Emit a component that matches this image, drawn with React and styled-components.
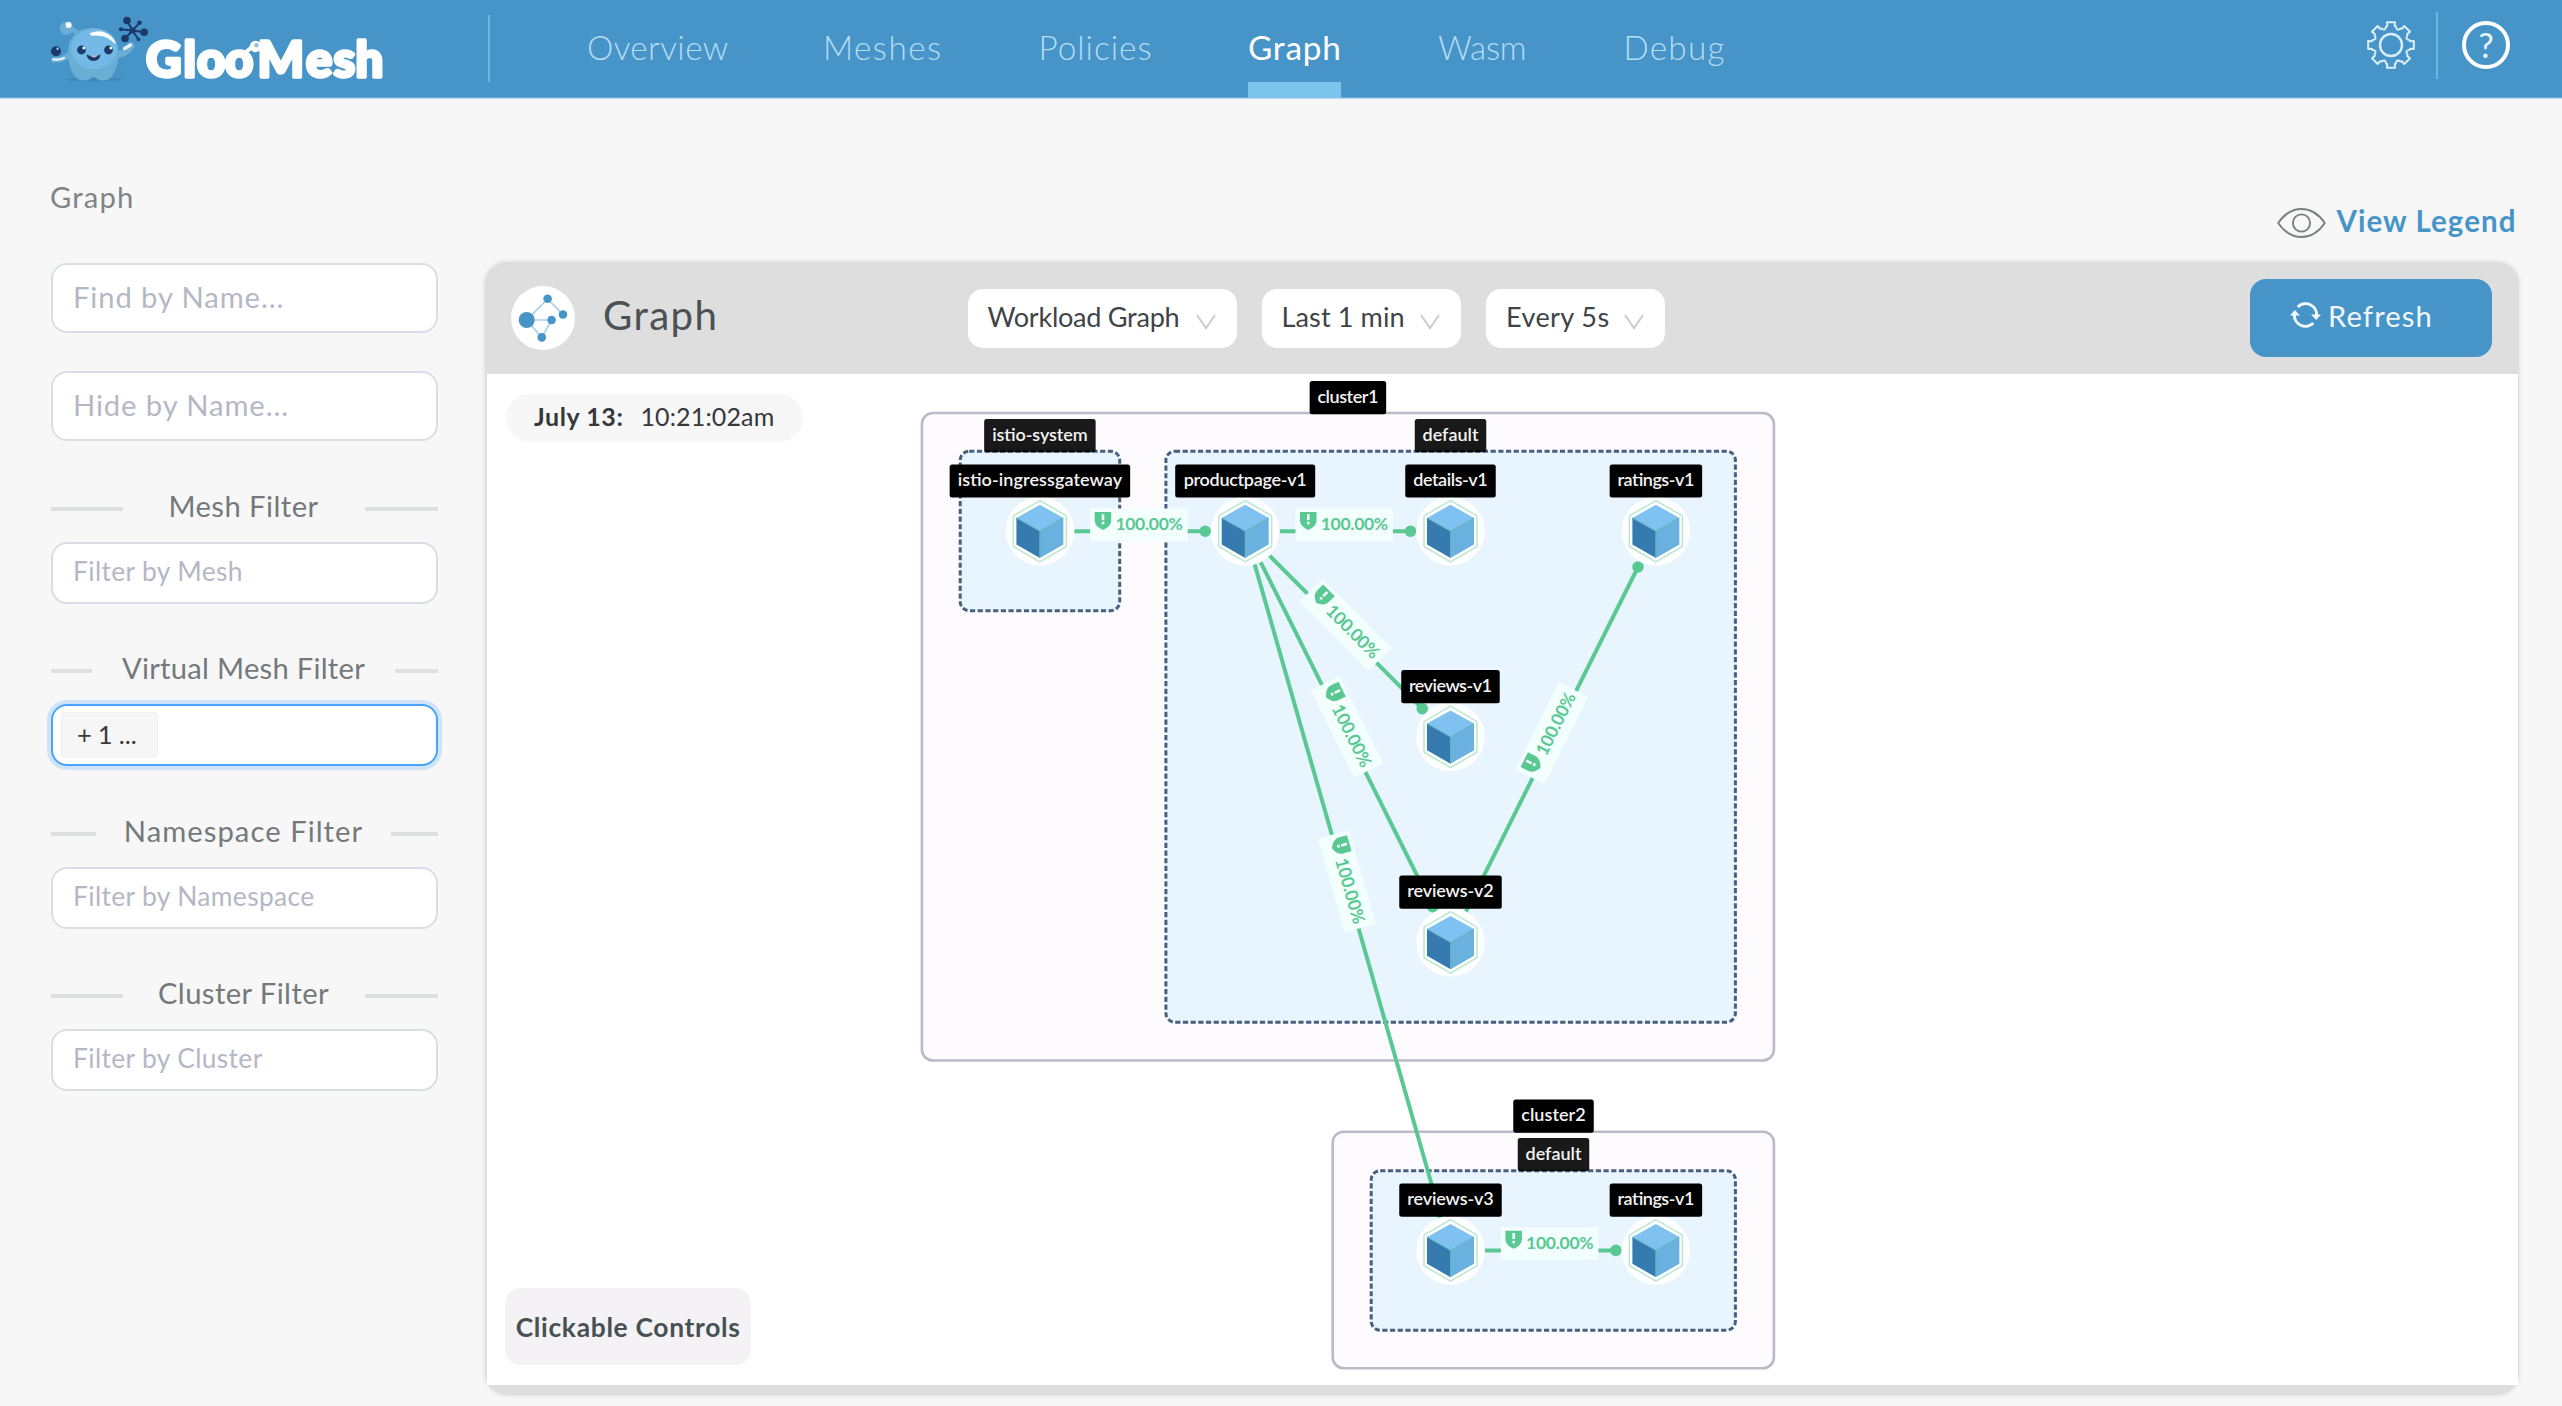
import React from 'react';
import styled, { createGlobalStyle } from 'styled-components';

const blue = '#4794c9';
const green = '#5ac893';
const sans = "Lato, 'Open Sans', 'Liberation Sans', sans-serif";

const GlobalStyle = createGlobalStyle`
  * { box-sizing: border-box; }
  body {
    margin: 0;
    background: #f7f7f7;
    font-family: ${sans};
    -webkit-font-smoothing: antialiased;
  }
`;

/* ---------- shell ---------- */

const Page = styled.div`
  display: flex;
  flex-direction: column;
  width: 2562px;
  height: 1406px;
  overflow: hidden;
`;

const Header = styled.header`
  display: flex;
  height: 99px;
  background: ${blue};
  border-bottom: 1px solid #bcdaee;
  box-shadow: inset 0 -1px 0 #66addb;
`;

const LogoArea = styled.div`
  width: 488px;
`;

const Divider = styled.div`
  width: 2px;
  height: 67px;
  margin-top: ${p => p.$top}px;
  background: #6cb5e0;
`;

const Nav = styled.nav`
  display: flex;
  gap: 97px;
  margin-left: 97px;
  flex: 1;
`;

const NavLink = styled.a`
  width: ${p => p.$width}px;
  height: 98px;
  line-height: 94px;
  white-space: nowrap;
  font-size: 33.3px;
  font-weight: ${p => (p.$active ? 400 : 300)};
  letter-spacing: ${p => p.$spacing}px;
  color: ${p => (p.$active ? '#fff' : '#b5dcf3')};
  border-bottom: 16px solid ${p => (p.$active ? '#7cc4ec' : 'transparent')};
`;

const HeaderTools = styled.div`
  display: flex;
  align-items: flex-start;
  padding-right: 52px;
`;

const GearButton = styled.div`
  width: 50px;
  height: 50px;
  margin: 20px 20px 0 0;
`;

const HelpButton = styled.div`
  display: flex;
  align-items: center;
  justify-content: center;
  width: 48px;
  height: 48px;
  margin: 21px 0 0 24px;
  border: 4px solid #fff;
  border-radius: 50%;
  color: #e9f5fc;
  font-size: 34px;
  line-height: 40px;
`;

const Content = styled.div`
  display: flex;
  padding: 0 43px 0 51px;
  gap: 47.5px;
  flex: 1;
`;

/* ---------- sidebar ---------- */

const Sidebar = styled.aside`
  display: flex;
  flex-direction: column;
  width: 386.5px;
  padding-top: 78px;
`;

const PageTitle = styled.h1`
  margin: 0 0 45.5px -1px;
  font-size: 29.2px;
  line-height: 40px;
  font-weight: 400;
  letter-spacing: 1.18px;
  color: #7f8487;
`;

const TextBox = styled.div`
  display: flex;
  align-items: center;
  flex: none;
  height: ${p => (p.$small ? 62 : 70)}px;
  padding: 0 ${p => (p.$chip ? 8 : 20)}px ${p => (p.$chip ? 0 : p.$small ? 4 : 3)}px;
  border: 2px solid ${p => (p.$focused ? '#49a5fb' : '#dadee3')};
  border-radius: 16px;
  background: #fff;
  box-shadow: ${p => (p.$focused ? '0 0 0 4px rgba(24, 130, 255, 0.17)' : 'none')};
  font-size: ${p => (p.$small ? 26.4 : 29.2)}px;
  letter-spacing: ${p => (p.$small ? 0.35 : 0.9)}px;
  color: #b4b8c5;
  white-space: nowrap;
`;

const SearchBox = styled(TextBox)`
  margin-bottom: ${p => (p.$last ? 0 : 38.5)}px;
`;

const FilterGroup = styled.section`
  display: flex;
  flex-direction: column;
  gap: 16.6px;
  margin-top: 44px;
`;

const FilterTitle = styled.div`
  display: flex;
  align-items: center;
  justify-content: space-between;
  height: 40px;
  font-size: 29.2px;
  letter-spacing: ${p => p.$spacing}px;
  color: #75797c;
  white-space: nowrap;
`;

const Rule = styled.span`
  width: ${p => p.$width}px;
  height: 4px;
  margin-top: 7px;
  background: #dedfdf;
`;

const Chip = styled.span`
  display: flex;
  align-items: center;
  width: 97px;
  height: 46.5px;
  padding: 0 0 2px 15px;
  border: 1px solid #f0f0f1;
  border-radius: 4px;
  background: #f6f6f6;
  color: #383b3d;
  font-size: 25.5px;
  letter-spacing: 0;
  word-spacing: -0.5px;
`;

/* ---------- main card ---------- */

const Main = styled.main`
  display: flex;
  flex-direction: column;
  flex: 1;
`;

const LegendLink = styled.div`
  display: flex;
  align-items: center;
  justify-content: flex-end;
  gap: 10.5px;
  height: 40px;
  margin: 101px 2.5px 22.3px 0;
  color: ${blue};
  font-size: 29.5px;
  font-weight: 700;
  letter-spacing: 1.05px;
  white-space: nowrap;

  svg { margin-top: 6px; }
`;

const Card = styled.section`
  display: flex;
  flex-direction: column;
  width: 2034px;
  height: 1133px;
  padding: 0 1.5px 10.5px;
  border-radius: 22px;
  background: #dedede;
  box-shadow: 0 0 5px rgba(0, 0, 0, 0.13);
`;

const CardHeader = styled.div`
  display: flex;
  align-items: center;
  height: 112px;
  padding-right: 25.5px;
`;

const Brand = styled.div`
  display: flex;
  align-items: center;
  gap: 28px;
  width: 481px;
  padding-left: 24.5px;
`;

const CardTitle = styled.h2`
  margin: 0;
  padding-bottom: 7px;
  color: #4b5154;
  font-size: 40.2px;
  font-weight: 400;
  letter-spacing: 1.4px;
`;

const Selects = styled.div`
  display: flex;
  gap: 25px;
`;

const Select = styled.div`
  display: flex;
  align-items: center;
  justify-content: space-between;
  width: ${p => p.$width}px;
  height: 58.7px;
  padding: 0 21px 4px 20px;
  border-radius: 15px;
  background: #fff;
  color: #3f4447;
  font-size: 27.1px;
  letter-spacing: ${p => p.$spacing}px;
  white-space: nowrap;

  svg { margin-top: 11px; }
`;

const RefreshButton = styled.div`
  display: flex;
  align-items: center;
  gap: 7px;
  width: 242px;
  height: 78px;
  margin-left: auto;
  padding: 0 0 6px 40px;
  border-radius: 16px;
  background: ${blue};
  color: #f0f8fd;
  font-size: 29.2px;
  letter-spacing: 1.1px;
`;

const Canvas = styled.div`
  position: relative;
  flex: 1;
  background: #fff;
  overflow: hidden;

  > svg { display: block; }
`;

const TimePill = styled.div`
  position: absolute;
  left: 19.5px;
  top: 19.5px;
  display: flex;
  align-items: center;
  gap: 17px;
  width: 297px;
  height: 48px;
  padding: 0 0 4px 28px;
  border-radius: 24px;
  background: #f7f7f7;
  color: #35393b;
  font-size: 25px;
  letter-spacing: 0.15px;
  white-space: nowrap;

  b { letter-spacing: 0.58px; }
`;

const ControlsButton = styled.div`
  position: absolute;
  left: 18.8px;
  bottom: 19.5px;
  display: flex;
  align-items: center;
  justify-content: center;
  width: 245.7px;
  height: 77.5px;
  border-radius: 16px;
  background: #f4f2f5;
  color: #475153;
  font-size: 26.4px;
  font-weight: 700;
  letter-spacing: 0.68px;
  white-space: nowrap;
`;

/* ---------- icons ---------- */

function Logo() {
  const navy = '#1b3a6b';
  const spokes = [[127, 20.5, 3.8], [139.5, 22.8, 2.3], [120.8, 29.2, 2], [144.2, 32.2, 3.8], [125, 38.5, 3.8], [138.5, 39.5, 1.8]];
  return (
    <svg width="488" height="98" viewBox="0 0 488 98">
      <ellipse cx="94" cy="79.5" rx="29" ry="1.8" fill="#3f88bd" />
      <path d="M78 33 L70 28" stroke="#6aaed4" strokeWidth="5" strokeLinecap="round" />
      <circle cx="66.5" cy="28.3" r="6.8" fill="#6aaed4" />
      <circle cx="68.6" cy="25" r="3" fill="#fff" />
      <path d="M70 54 Q64 60 54 60" stroke="#6aaed4" strokeWidth="5.5" fill="none" strokeLinecap="round" />
      <path d="M53 59.3 Q59 60.5 64 58" stroke="#e8f4fb" strokeWidth="2.2" fill="none" strokeLinecap="round" />
      <circle cx="56" cy="51.3" r="5" fill={navy} />
      <circle cx="57.6" cy="48.8" r="1.2" fill="#9cc8e6" />
      <path d="M116 55 Q126 54 131 46" stroke="#6aaed4" strokeWidth="7" fill="none" strokeLinecap="round" />
      <path d="M124.5 48.5 L130.5 45" stroke="#e8f4fb" strokeWidth="3.2" strokeLinecap="round" />
      <path d="M68 52 C68 36 79 28 93.5 28 C108 28 118.5 37 118.5 52 C118.5 62 116 70 112 76 C108 82 99 82 93.5 76.5 C88 82 79 82 74.5 76 C71 70 68 62 68 52 Z" fill="#6aaed4" />
      <ellipse cx="94" cy="49" rx="23" ry="20.3" fill="#74b9e5" />
      <path d="M90.5 33.5 C101 29.5 111 34 115 43 C109 36.5 101 34 92 35.2 Z" fill="#fff" stroke="#fff" strokeWidth="1.3" strokeLinejoin="round" />
      <circle cx="81.5" cy="50" r="4.4" fill={navy} />
      <circle cx="108.5" cy="50" r="4.4" fill={navy} />
      <circle cx="83.8" cy="48" r="1.5" fill="#e8f4fb" />
      <circle cx="110.8" cy="48" r="1.5" fill="#e8f4fb" />
      <path d="M86.5 54.5 Q93.5 57.5 100.5 54.5 Q100 61 93.5 61 Q87.5 61 86.5 54.5 Z" fill={navy} />
      <path d="M89 55.5 L98.5 55.5 L94 57.8 Z" fill="#c3b6c4" />
      {spokes.map(([x, y, r]) => (
        <g key={x}>
          <path d={`M132.5 30.5 L${x} ${y}`} stroke={navy} strokeWidth="2" />
          <circle cx={x} cy={y} r={r} fill={navy} />
        </g>
      ))}
      <circle cx="132.5" cy="30.5" r="3" fill={navy} />
      <text
        x="146 183.5 197 225 257.5 306 333.5 355.5"
        y="76.8"
        fontFamily={sans}
        fontWeight="900"
        fontSize="49"
        fill="#fff"
        stroke="#fff"
        strokeWidth="3.4"
        strokeLinejoin="round"
      >
        GlooMesh
      </text>
      <path d="M246 52 L252 47" stroke="#fff" strokeWidth="4" strokeLinecap="round" />
      <circle cx="255.5" cy="46.5" r="5.8" fill="#fff" />
      <circle cx="256.5" cy="45.3" r="2.2" fill="#8fc0e2" />
    </svg>
  );
}

function Gear() {
  const at = (r, deg) => {
    const a = (deg * Math.PI) / 180;
    return `${(25 + r * Math.cos(a)).toFixed(2)} ${(25 + r * Math.sin(a)).toFixed(2)}`;
  };
  let d = '';
  for (let k = 0; k < 8; k += 1) {
    const c = k * 45;
    d += `${k ? 'L' : 'M'}${at(19, c - 15)} L${at(19.5, c - 11)} L${at(23.2, c - 10)} L${at(23.2, c + 10)} L${at(19.5, c + 11)} L${at(19, c + 15)} Q${at(14.8, c + 22.5)} ${at(19, c + 30)} `;
  }
  return (
    <svg width="50" height="50" viewBox="0 0 50 50" fill="none" stroke="#d9eefa" strokeWidth="2" strokeLinejoin="round">
      <path d={`${d}Z`} />
      <circle cx="25" cy="25" r="11" strokeWidth="2.4" />
    </svg>
  );
}

const Eye = () => (
  <svg width="49" height="30" viewBox="0 0 49 30" fill="none" stroke="#7b7f82" strokeWidth="1.9">
    <path d="M1.2 15 C14 -3.7 35 -3.7 47.8 15 C35 33.7 14 33.7 1.2 15 Z" strokeLinejoin="round" />
    <circle cx="24.5" cy="15" r="8.6" />
  </svg>
);

const Chevron = () => (
  <svg width="20" height="16" viewBox="0 0 20 16" fill="none" stroke="#cdcbd1" strokeWidth="2">
    <path d="M1 1 L10 14 L19 1" />
  </svg>
);

const RefreshIcon = () => (
  <svg width="31" height="26" viewBox="0 0 31 26" fill="none" stroke="#f4fafe" strokeWidth="3">
    <path d="M4.5 12 A11 11 0 0 0 23.3 21" />
    <path d="M26.5 14 A11 11 0 0 0 7.7 5" />
    <path d="M0 13.5 L4.8 8 L10 13.5 Z" fill="#f4fafe" stroke="none" />
    <path d="M21 12.5 L31 12.5 L26.2 18 Z" fill="#f4fafe" stroke="none" />
  </svg>
);

const GraphBadge = () => (
  <svg width="64" height="64" viewBox="0 0 64 64">
    <circle cx="32" cy="32" r="32" fill="#fff" />
    <path d="M15.7 34 L36.6 13 L52 28.5 M15.7 34 H40.6 L30.8 51.5 Z" fill="none" stroke="#a5cfea" strokeWidth="1.6" />
    <g fill={blue}>
      <circle cx="15.7" cy="34" r="8" />
      <circle cx="36.6" cy="12.8" r="4.3" />
      <circle cx="52" cy="28.5" r="4.3" />
      <circle cx="40.6" cy="34" r="4.3" />
      <circle cx="30.8" cy="51.4" r="4.3" />
    </g>
  </svg>
);

/* ---------- service graph ---------- */

const nodes = {
  gateway: { x: 1039.7, y: 531.5, name: 'istio-ingressgateway', box: 180.5, text: 164.5 },
  product: { x: 1245, y: 531.5, name: 'productpage-v1', box: 140, text: 123 },
  details: { x: 1450.3, y: 531.5, name: 'details-v1', box: 90.5, text: 74.5 },
  ratings: { x: 1655.7, y: 531.5, name: 'ratings-v1', box: 92.5, text: 77 },
  reviews1: { x: 1450.3, y: 737.2, name: 'reviews-v1', box: 98.5, text: 83 },
  reviews2: { x: 1450.3, y: 942.7, name: 'reviews-v2', box: 102.5, text: 86.5 },
  reviews3: { x: 1450.3, y: 1250.7, name: 'reviews-v3', box: 102.5, text: 86.5 },
  ratings2: { x: 1655.7, y: 1250.7, name: 'ratings-v1', box: 92.5, text: 77 },
};

const edges = [
  { from: 'gateway', to: 'product', lx: 1139, ly: 525 },
  { from: 'product', to: 'details', lx: 1344.3, ly: 525 },
  { from: 'product', to: 'reviews1', lx: 1345.3, ly: 625.3 },
  { from: 'product', to: 'reviews2', lx: 1346.7, ly: 727.5 },
  { from: 'product', to: 'reviews3', lx: 1346.7, ly: 881.8 },
  { from: 'reviews2', to: 'ratings', lx: 1551.7, ly: 733.3 },
  { from: 'reviews3', to: 'ratings2', lx: 1549.7, ly: 1243.8 },
];

const clusters = [
  { x: 921.7, y: 413.3, w: 852, h: 647.5 },
  { x: 1332.5, y: 1132, w: 441.2, h: 236.5 },
];

const namespaces = [
  { x: 960, y: 451.5, w: 159.5, h: 159.5 },
  { x: 1165.7, y: 451.5, w: 569.5, h: 571 },
  { x: 1371, y: 1171, w: 364.2, h: 159.5 },
];

const groupLabels = [
  { x: 1347.7, y: 398, name: 'cluster1', box: 76.5, text: 61 },
  { x: 1553.3, y: 1116.5, name: 'cluster2', box: 80.5, text: 64.5 },
  { x: 1039.7, y: 436, name: 'istio-system', box: 111.5, text: 95.5, soft: true },
  { x: 1450.3, y: 436, name: 'default', box: 71.5, text: 56, soft: true },
  { x: 1553.3, y: 1155, name: 'default', box: 71.5, text: 56, soft: true },
];

const TagText = styled.text`
  font-family: ${sans};
  font-size: 18px;
  font-weight: 600;
  fill: #f3f3f3;
  text-anchor: middle;
`;

const RateText = styled.text`
  font-family: ${sans};
  font-size: 17.5px;
  font-weight: 700;
  fill: ${green};
`;

function Tag({ x, y, name, box, text, soft }) {
  return (
    <g>
      <rect x={x - box / 2} y={y - 16.6} width={box} height="33.2" rx="2.5" fill="#000" fillOpacity={soft ? 0.9 : 1} />
      <TagText x={x} y={y + 5} textLength={text}>{name}</TagText>
    </g>
  );
}

function Node({ x, y, ...tag }) {
  return (
    <g>
      <g transform={`translate(${x} ${y})`}>
        <circle r="34.3" fill="#fff" />
        <path d="M0 -30.7 L26.5 -15.3 V15.3 L0 30.7 L-26.5 15.3 V-15.3 Z" fill="none" stroke="#b9e8d1" strokeWidth="1.5" />
        <path d="M0 -26.5 L23.5 -13.3 L0 0 L-23.5 -13.3 Z" fill="#7fc2f1" />
        <path d="M-23.5 -13.3 L0 0 V26.8 L-23.5 13.3 Z" fill="#357bb0" />
        <path d="M23.5 -13.3 L0 0 V26.8 L23.5 13.3 Z" fill="#6bb1e0" />
        <path d="M-23.5 -13.3 L0 0 L23.5 -13.3 M0 0 V26.5" fill="none" stroke="#5cb5b5" strokeWidth="1" />
      </g>
      <Tag x={x} y={y - 50.2} {...tag} />
    </g>
  );
}

function Edge({ from, to, lx, ly }) {
  const a = nodes[from];
  const b = nodes[to];
  const len = Math.hypot(b.x - a.x, b.y - a.y);
  const ux = (b.x - a.x) / len;
  const uy = (b.y - a.y) / len;
  const angle = (Math.atan2(uy, ux) * 180) / Math.PI;
  const endX = b.x - ux * 40;
  const endY = b.y - uy * 40;
  return (
    <g>
      <path d={`M${a.x + ux * 34.5} ${a.y + uy * 34.5} L${endX} ${endY}`} stroke={green} strokeWidth="4" />
      <circle cx={endX} cy={endY} r="5.8" fill={green} />
      <g transform={`translate(${lx} ${ly}) rotate(${angle})`}>
        <rect x="-49" y="-16.2" width="97.5" height="32.4" fill="#f2fffd" />
        <path d="M-44.5 -12.8 H-28 V-4 Q-28 1.5 -36.2 5.3 Q-44.5 1.5 -44.5 -4 Z" fill={green} />
        <path d="M-36.2 -10.5 V-4.5" stroke="#f2fffd" strokeWidth="2.6" />
        <circle cx="-36.2" cy="-1.6" r="1.5" fill="#f2fffd" />
        <RateText x="-23.8" y="5.5" textLength="67.5">100.00%</RateText>
      </g>
    </g>
  );
}

function ServiceGraph() {
  return (
    <svg width="2031" height="1011" viewBox="486.8 374.3 2031 1011">
      {clusters.map(c => (
        <rect key={c.y} x={c.x} y={c.y} width={c.w} height={c.h} rx="11" fill="#fdfbfe" stroke="#bbbbc7" strokeWidth="2.6" />
      ))}
      {namespaces.map(n => (
        <rect key={n.x} x={n.x} y={n.y} width={n.w} height={n.h} rx="9" fill="#e8f5fe" stroke="#48607f" strokeWidth="3" strokeDasharray="5.2 2.5" />
      ))}
      {edges.map(e => <Edge key={e.from + e.to} {...e} />)}
      {groupLabels.map(l => <Tag key={l.name + l.y} {...l} />)}
      {Object.entries(nodes).map(([id, n]) => <Node key={id} {...n} />)}
    </svg>
  );
}

/* ---------- app ---------- */

const links = [
  { label: 'Overview', width: 139, spacing: 0.4 },
  { label: 'Meshes', width: 118.5, spacing: 1.4 },
  { label: 'Policies', width: 112.5, spacing: 0.98 },
  { label: 'Graph', width: 93, spacing: 0.8, active: true },
  { label: 'Wasm', width: 88.5, spacing: -0.2 },
  { label: 'Debug', width: 102, spacing: 1.22 },
];

const filters = [
  { title: 'Mesh Filter', spacing: 0.45, rule: 71.5, placeholder: 'Filter by Mesh' },
  { title: 'Virtual Mesh Filter', spacing: 0.26, rule: 41, chip: '+ 1 ...' },
  { title: 'Namespace Filter', spacing: 1.05, rule: 45, placeholder: 'Filter by Namespace' },
  { title: 'Cluster Filter', spacing: 0.41, rule: 71.5, placeholder: 'Filter by Cluster' },
];

export default function App() {
  return (
    <Page>
      <GlobalStyle />
      <Header>
        <LogoArea><Logo /></LogoArea>
        <Divider $top={15} />
        <Nav>
          {links.map(l => (
            <NavLink key={l.label} $width={l.width} $spacing={l.spacing} $active={l.active}>{l.label}</NavLink>
          ))}
        </Nav>
        <HeaderTools>
          <GearButton><Gear /></GearButton>
          <Divider $top={11.5} />
          <HelpButton>?</HelpButton>
        </HeaderTools>
      </Header>
      <Content>
        <Sidebar>
          <PageTitle>Graph</PageTitle>
          <SearchBox>Find by Name...</SearchBox>
          <SearchBox $last>Hide by Name...</SearchBox>
          {filters.map(f => (
            <FilterGroup key={f.title}>
              <FilterTitle $spacing={f.spacing}>
                <Rule $width={f.rule} />
                {f.title}
                <Rule $width={f.rule + 1.5} />
              </FilterTitle>
              <TextBox $small $focused={!!f.chip} $chip={!!f.chip}>
                {f.chip ? <Chip>{f.chip}</Chip> : f.placeholder}
              </TextBox>
            </FilterGroup>
          ))}
        </Sidebar>
        <Main>
          <LegendLink><Eye />View Legend</LegendLink>
          <Card>
            <CardHeader>
              <Brand>
                <GraphBadge />
                <CardTitle>Graph</CardTitle>
              </Brand>
              <Selects>
                <Select $width={269} $spacing={-0.28}>Workload Graph<Chevron /></Select>
                <Select $width={199.5} $spacing={0.1}>Last 1 min<Chevron /></Select>
                <Select $width={178.6} $spacing={0.38}>Every 5s<Chevron /></Select>
              </Selects>
              <RefreshButton><RefreshIcon />Refresh</RefreshButton>
            </CardHeader>
            <Canvas>
              <ServiceGraph />
              <TimePill><b>July 13:</b>10:21:02am</TimePill>
              <ControlsButton>Clickable Controls</ControlsButton>
            </Canvas>
          </Card>
        </Main>
      </Content>
    </Page>
  );
}
